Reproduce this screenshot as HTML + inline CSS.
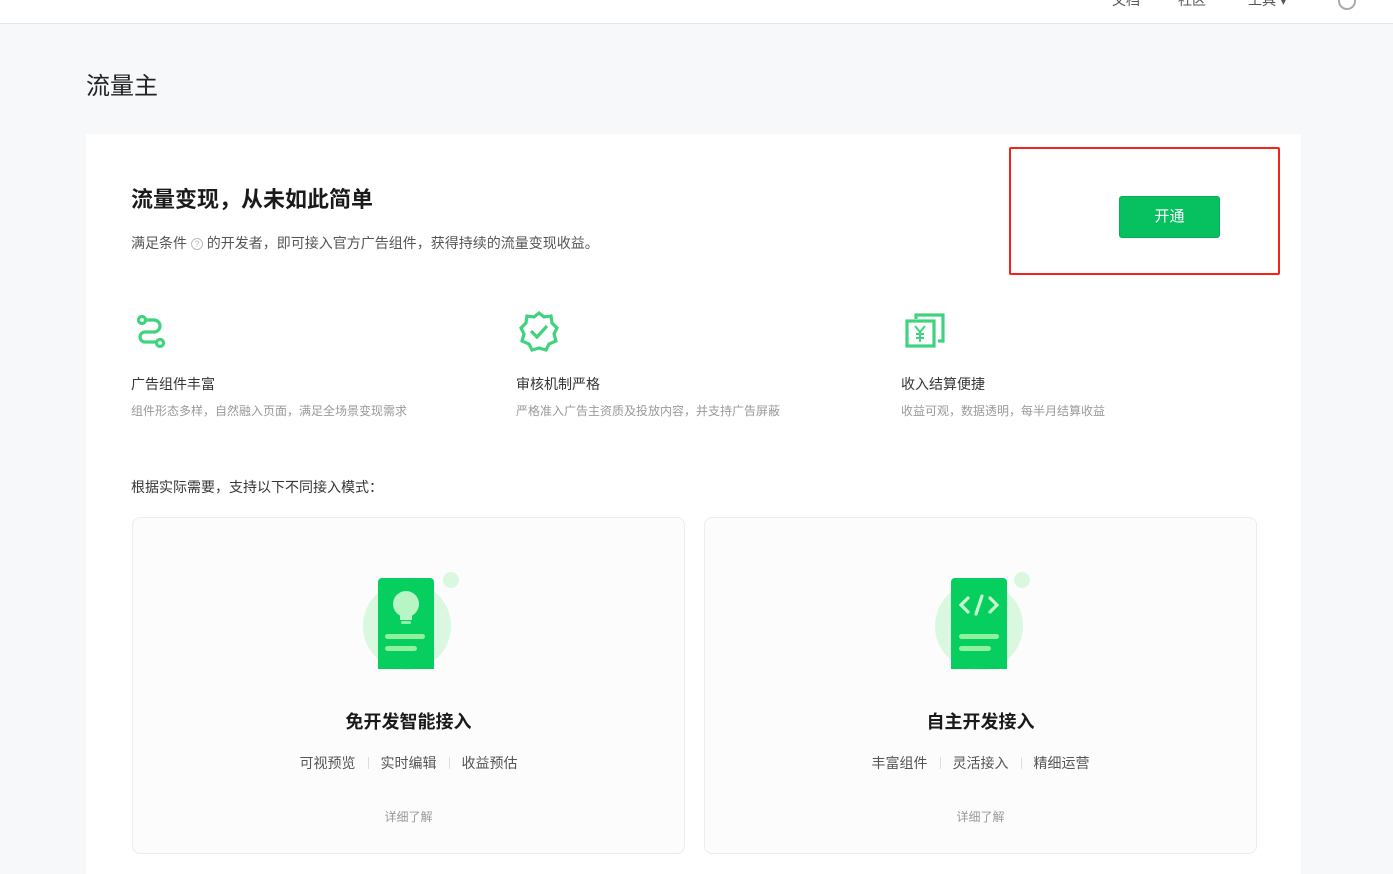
<!DOCTYPE html>
<html><head><meta charset="utf-8"><style>
body{margin:0;width:1393px;height:866px;overflow:hidden;background:#f7f8fa;font-family:"Liberation Sans","Noto Sans CJK SC",sans-serif;position:relative;color:#353535}
.hdr{position:absolute;left:0;top:0;width:1393px;height:23px;background:#fff;border-bottom:1px solid #e4e6ea}
.abs{position:absolute;white-space:nowrap}
.card{position:absolute;left:86px;top:134px;width:1215px;height:740px;background:#fff}
.mode{position:absolute;top:517px;width:551px;height:335px;border:1px solid #ececec;border-radius:8px;background:#fcfcfc}
.mode .t{position:absolute;top:190px;width:100%;text-align:center;font-size:18px;font-weight:bold;color:#1a1a1a}
.mode .s{position:absolute;top:235px;width:100%;text-align:center;font-size:14px;color:#555}
.mode .s i{display:inline-block;width:1px;height:12px;background:#ddd;margin:0 12px;vertical-align:-1px}
.mode .d{position:absolute;top:290px;width:100%;text-align:center;font-size:12px;color:#999}
.ft{font-size:14px;color:#353535}
.fd{font-size:12px;color:#9a9a9a}
</style></head><body>
<div class="hdr">
<div class="abs" style="left:1112px;top:-10px;font-size:14px;color:#555">文档</div>
<div class="abs" style="left:1178px;top:-10px;font-size:14px;color:#555">社区</div>
<div class="abs" style="left:1248px;top:-10px;font-size:14px;color:#555">工具 ▾</div>
<div class="abs" style="left:1338px;top:-8px;width:14px;height:14px;border:2px solid #aaa;border-radius:50%"></div>
</div>
<div class="abs" style="left:86px;top:66px;font-size:24px;color:#222">流量主</div>
<div class="card"></div>
<div class="abs" style="left:131px;top:182px;font-size:22px;font-weight:bold;color:#1a1a1a">流量变现，从未如此简单</div>
<div class="abs" style="left:131px;top:233px;font-size:14px;color:#555">满足条件 <span style="display:inline-block;width:10px;height:10px;border:1px solid #bbb;border-radius:50%;font-size:9px;line-height:10px;text-align:center;color:#bbb;vertical-align:1px">?</span> 的开发者，即可接入官方广告组件，获得持续的流量变现收益。</div>
<div class="abs" style="left:1009px;top:147px;width:267px;height:124px;border:2px solid #f5221b;border-radius:2px"></div>
<div class="abs" style="left:1119px;top:196px;width:99px;height:40px;background:#07c160;border:1px solid #06ad56;border-radius:3px;color:#fff;font-size:15px;text-align:center;line-height:40px">开通</div>

<svg class="abs" style="left:135px;top:312px" width="36" height="38" viewBox="0 0 36 38" fill="none" stroke="#3fd37f" stroke-width="3.2"><circle cx="7" cy="8" r="3.5"/><circle cx="25" cy="31" r="3.5"/><path d="M10.5 8H19a6 6 0 0 1 0 12H10a5 5 0 0 0 0 10h11"/></svg>
<svg class="abs" style="left:518px;top:310px" width="42" height="42" viewBox="0 0 42 42" fill="none" stroke="#3fd37f" stroke-width="3.2"><path d="M21 3l5 4 7-1 1 7 5 5-3 6 2 7-7 3-3 6-7-2-7 2-3-6-7-3 2-7-3-6 5-5 1-7 7 1z"/><path d="M13 21l6 6 10-11"/></svg>
<svg class="abs" style="left:905px;top:313px" width="40" height="36" viewBox="0 0 40 36" fill="none" stroke="#3fd37f" stroke-width="3.2"><path d="M11 6V2h27v26h-5"/><rect x="2" y="8" width="27" height="25"/><path d="M10 13l5 6 5-6M15 19v10M11 21h8M11 25h8" stroke-width="2"/></svg>

<div class="abs ft" style="left:131px;top:374px">广告组件丰富</div>
<div class="abs fd" style="left:131px;top:402px">组件形态多样，自然融入页面，满足全场景变现需求</div>
<div class="abs ft" style="left:516px;top:374px">审核机制严格</div>
<div class="abs fd" style="left:516px;top:402px">严格准入广告主资质及投放内容，并支持广告屏蔽</div>
<div class="abs ft" style="left:901px;top:374px">收入结算便捷</div>
<div class="abs fd" style="left:901px;top:402px">收益可观，数据透明，每半月结算收益</div>
<div class="abs" style="left:131px;top:477px;font-size:14px;color:#353535">根据实际需要，支持以下不同接入模式：</div>

<div class="mode" style="left:132px">
<svg class="abs" style="left:225px;top:50px" width="110" height="110" viewBox="0 0 110 110"><circle cx="49" cy="58" r="44" fill="#d9f8df"/><path d="M20 80a44 44 0 0 0 58 0z" fill="#c6f2cf"/><circle cx="93" cy="12" r="8" fill="#d9f8df"/><path d="M20 14a4 4 0 0 1 4-4h48a4 4 0 0 1 4 4v87H20z" fill="#07cf5f"/><circle cx="48" cy="36" r="13" fill="#b8f5c4"/><rect x="42" y="44" width="12" height="8" fill="#b8f5c4"/><rect x="43" y="53" width="10" height="3" rx="1.5" fill="#9ae8a8"/><rect x="27" y="66" width="40" height="5" rx="2.5" fill="#8ff09e"/><rect x="27" y="78" width="32" height="5" rx="2.5" fill="#8ff09e"/></svg>
<div class="t">免开发智能接入</div>
<div class="s">可视预览<i></i>实时编辑<i></i>收益预估</div>
<div class="d">详细了解</div>
</div>
<div class="mode" style="left:704px">
<svg class="abs" style="left:225px;top:50px" width="110" height="110" viewBox="0 0 110 110"><circle cx="49" cy="58" r="44" fill="#d9f8df"/><path d="M20 80a44 44 0 0 0 58 0z" fill="#c6f2cf"/><circle cx="92" cy="12" r="8" fill="#d9f8df"/><path d="M21 14a4 4 0 0 1 4-4h48a4 4 0 0 1 4 4v87H21z" fill="#07cf5f"/><path d="M38 30l-7 7 7 7M60 30l7 7-7 7M52 28l-6 18" stroke="#c8fad2" stroke-width="3.2" fill="none" stroke-linecap="round"/><rect x="29" y="66" width="40" height="5" rx="2.5" fill="#8ff09e"/><rect x="29" y="78" width="32" height="5" rx="2.5" fill="#8ff09e"/></svg>
<div class="t">自主开发接入</div>
<div class="s">丰富组件<i></i>灵活接入<i></i>精细运营</div>
<div class="d">详细了解</div>
</div>
</body></html>
